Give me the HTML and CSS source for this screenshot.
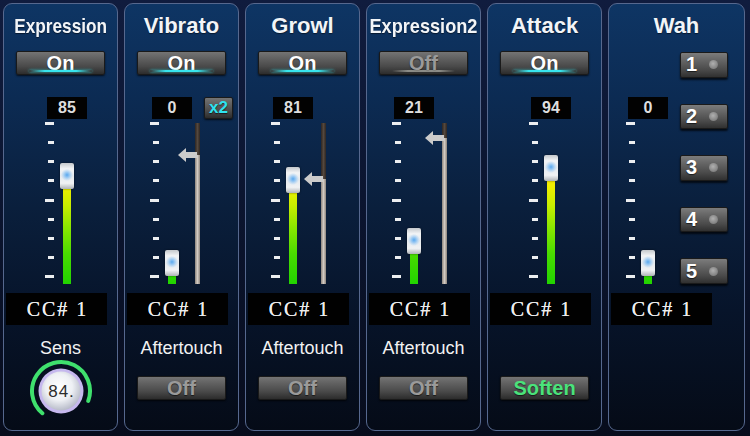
FILE: index.html
```html
<!DOCTYPE html>
<html>
<head>
<meta charset="utf-8">
<title>Controllers</title>
<link rel="stylesheet" href="styles.css">
</head>
<body>
<div class="rack">

  <section class="panel p-main">
    <h2 class="title"><span class="sq sq-expr">Expression</span></h2>
    <div class="btn toggle on">On</div>
    <div class="mid">
      <div class="fader">
        <div class="vbox">85</div>
        <div class="fader-body">
          <div class="ticks"><i class="long"></i><i></i><i></i><i></i><i class="long"></i><i></i><i></i><i></i><i class="long"></i></div>
          <div class="track"><div class="bar" style="height:108px"></div><div class="handle" style="top:43px"></div></div>
        </div>
      </div>
    </div>
    <div class="cc">CC# 1</div>
    <div class="label">Sens</div>
    <svg class="knob" width="64" height="64" viewBox="0 0 64 64">
      <defs>
        <radialGradient id="kg" cx="45%" cy="40%" r="62%">
          <stop offset="0" stop-color="#ffffff"/>
          <stop offset="0.55" stop-color="#eef0f4"/>
          <stop offset="1" stop-color="#b4b8c6"/>
        </radialGradient>
      </defs>
      <path d="M13.36 54.21 A29 29 0 1 1 59.25 41.92" fill="none" stroke="#3fe06d" stroke-width="4" stroke-linecap="round"/>
      <circle cx="32" cy="32" r="22.5" fill="#c6b8ee"/>
      <circle cx="32" cy="32" r="19.5" fill="url(#kg)"/>
      <text x="32.5" y="38" text-anchor="middle" class="knob-val">84.</text>
    </svg>
  </section>

  <section class="panel p-aux">
    <h2 class="title">Vibrato</h2>
    <div class="btn toggle on">On</div>
    <div class="mid">
      <div class="fader">
        <div class="vbox">0</div>
        <div class="fader-body">
          <div class="ticks"><i class="long"></i><i></i><i></i><i></i><i class="long"></i><i></i><i></i><i></i><i class="long"></i></div>
          <div class="track"><div class="bar" style="height:21px"></div><div class="handle" style="top:130px"></div></div>
        </div>
      </div>
      <div class="aux aux-vib">
        <div class="aux-top"><div class="btn x2">x2</div></div>
        <div class="line">
          <div class="line-top" style="height:32px"></div>
          <div class="line-bottom"></div>
          <svg class="arrow" style="top:25px" width="19" height="14" viewBox="0 0 19 14"><polygon points="0,7 8,0 8,4 19,4 19,10 8,10 8,14"/></svg>
        </div>
      </div>
    </div>
    <div class="cc">CC# 1</div>
    <div class="label">Aftertouch</div>
    <div class="btn off">Off</div>
  </section>

  <section class="panel p-aux">
    <h2 class="title">Growl</h2>
    <div class="btn toggle on">On</div>
    <div class="mid">
      <div class="fader">
        <div class="vbox">81</div>
        <div class="fader-body">
          <div class="ticks"><i class="long"></i><i></i><i></i><i></i><i class="long"></i><i></i><i></i><i></i><i class="long"></i></div>
          <div class="track"><div class="bar" style="height:104px"></div><div class="handle" style="top:47px"></div></div>
        </div>
      </div>
      <div class="aux">
        <div class="aux-top"></div>
        <div class="line">
          <div class="line-top" style="height:56px"></div>
          <div class="line-bottom"></div>
          <svg class="arrow" style="top:49px" width="19" height="14" viewBox="0 0 19 14"><polygon points="0,7 8,0 8,4 19,4 19,10 8,10 8,14"/></svg>
        </div>
      </div>
    </div>
    <div class="cc">CC# 1</div>
    <div class="label">Aftertouch</div>
    <div class="btn off">Off</div>
  </section>

  <section class="panel p-aux">
    <h2 class="title"><span class="sq sq-expr2">Expression2</span></h2>
    <div class="btn toggle off">Off</div>
    <div class="mid">
      <div class="fader">
        <div class="vbox">21</div>
        <div class="fader-body">
          <div class="ticks"><i class="long"></i><i></i><i></i><i></i><i class="long"></i><i></i><i></i><i></i><i class="long"></i></div>
          <div class="track"><div class="bar" style="height:42px"></div><div class="handle" style="top:108px"></div></div>
        </div>
      </div>
      <div class="aux">
        <div class="aux-top"></div>
        <div class="line">
          <div class="line-top" style="height:15px"></div>
          <div class="line-bottom"></div>
          <svg class="arrow" style="top:8px" width="19" height="14" viewBox="0 0 19 14"><polygon points="0,7 8,0 8,4 19,4 19,10 8,10 8,14"/></svg>
        </div>
      </div>
    </div>
    <div class="cc">CC# 1</div>
    <div class="label">Aftertouch</div>
    <div class="btn off">Off</div>
  </section>

  <section class="panel p-main">
    <h2 class="title">Attack</h2>
    <div class="btn toggle on">On</div>
    <div class="mid">
      <div class="fader">
        <div class="vbox">94</div>
        <div class="fader-body">
          <div class="ticks"><i class="long"></i><i></i><i></i><i></i><i class="long"></i><i></i><i></i><i></i><i class="long"></i></div>
          <div class="track"><div class="bar" style="height:117px"></div><div class="handle" style="top:35px"></div></div>
        </div>
      </div>
    </div>
    <div class="cc">CC# 1</div>
    <div class="label"></div>
    <div class="btn soften">Soften</div>
  </section>

  <section class="panel p-wah">
    <h2 class="title">Wah</h2>
    <div class="wah-body">
      <div class="fader">
        <div class="vbox">0</div>
        <div class="fader-body">
          <div class="ticks"><i class="long"></i><i></i><i></i><i></i><i class="long"></i><i></i><i></i><i></i><i class="long"></i></div>
          <div class="track"><div class="bar" style="height:21px"></div><div class="handle" style="top:130px"></div></div>
        </div>
      </div>
      <div class="presets">
        <div class="preset"><span>1</span><b class="led"></b></div>
        <div class="preset"><span>2</span><b class="led"></b></div>
        <div class="preset"><span>3</span><b class="led"></b></div>
        <div class="preset"><span>4</span><b class="led"></b></div>
        <div class="preset"><span>5</span><b class="led"></b></div>
      </div>
    </div>
    <div class="cc">CC# 1</div>
  </section>

</div>
</body>
</html>
```

FILE: styles.css
```css
html, body {
  margin: 0;
  padding: 0;
}
body {
  width: 750px;
  height: 436px;
  overflow: hidden;
  background: linear-gradient(180deg, #101c3e 0%, #0b1530 45%, #070c1c 100%);
  font-family: "Liberation Sans", Arial, sans-serif;
  color: #fff;
}
.rack {
  display: flex;
  gap: 6px;
  height: 436px;
  box-sizing: border-box;
  padding: 3px 5px 5px 3px;
}
.panel {
  flex: 0 0 115px;
  min-width: 0;
  box-sizing: border-box;
  display: flex;
  flex-direction: column;
  align-items: center;
  padding-top: 9px;
  border: 1px solid #56688e;
  border-radius: 9px;
  background: linear-gradient(180deg, #0e3564 0%, #0c2b53 22%, #0a1f3c 48%, #07142a 72%, #050b17 100%);
}
.p-wah {
  flex: 1 1 auto;
}
.title {
  margin: 0;
  height: 26px;
  display: flex;
  justify-content: center;
  align-self: stretch;
  min-width: 0;
  white-space: nowrap;
  font-size: 22px;
  line-height: 26px;
  font-weight: bold;
  color: #f2f5f8;
  text-shadow: 0 1px 1px rgba(0, 0, 0, 0.5);
}
.sq {
  display: inline-block;
  flex: none;
  font-size: 21px;
}
.sq-expr {
  transform: scaleX(0.82);
}
.sq-expr2 {
  transform: scaleX(0.865);
}

/* buttons */
.btn {
  position: relative;
  width: 89px;
  height: 24px;
  box-sizing: border-box;
  border: 1px solid #1a1a1a;
  border-radius: 2px;
  background: linear-gradient(180deg, #747474 0%, #606060 30%, #4a4a4a 65%, #2c2c2c 100%);
  box-shadow: 0 1px 2px rgba(0, 0, 0, 0.7);
  font-size: 20px;
  line-height: 22px;
  font-weight: bold;
  text-align: center;
  color: #ffffff;
  text-shadow: 0 1px 1px rgba(0, 0, 0, 0.6);
}
.toggle {
  margin-top: 12px;
}
.btn.off {
  color: #9a9a9a;
}
.toggle.on::after,
.toggle.off::after {
  content: "";
  position: absolute;
  left: 12px;
  right: 12px;
  bottom: 2px;
  height: 2px;
  border-radius: 1px;
}
.toggle.on::after {
  background: linear-gradient(90deg, rgba(40, 220, 230, 0) 0%, #38e4ec 25%, #38e4ec 75%, rgba(40, 220, 230, 0) 100%);
  box-shadow: 0 0 3px rgba(50, 220, 230, 0.8);
}
.toggle.off::after {
  background: linear-gradient(90deg, rgba(200, 200, 200, 0) 0%, rgba(210, 210, 200, 0.55) 25%, rgba(210, 210, 200, 0.55) 75%, rgba(200, 200, 200, 0) 100%);
}
.btn.soften {
  color: #4be27b;
  margin-top: 17px;
}
.label + .btn {
  margin-top: 17px;
}

/* middle section */
.mid {
  align-self: stretch;
  display: flex;
  margin-top: 22px;
  height: 187px;
}
.p-main .mid {
  padding-left: 41px;
}
.p-aux .mid {
  padding-left: 25px;
}
.fader {
  width: 44px;
  display: flex;
  flex-direction: column;
}
.vbox {
  width: 40px;
  height: 22px;
  margin-left: 2px;
  margin-bottom: 1px;
  background: #020202;
  font-size: 16px;
  line-height: 22px;
  font-weight: bold;
  text-align: center;
  color: #dedede;
}
.fader-body {
  display: flex;
  height: 164px;
  gap: 6px;
}
.ticks {
  width: 9px;
  height: 156px;
  margin-top: 2px;
  display: flex;
  flex-direction: column;
  justify-content: space-between;
  align-items: flex-end;
}
.ticks i {
  display: block;
  width: 6px;
  height: 3px;
  background: #eceef0;
}
.ticks i.long {
  width: 9px;
}
.track {
  position: relative;
  width: 14px;
  height: 164px;
}
.bar {
  position: absolute;
  left: 3px;
  bottom: 0;
  width: 8px;
  background: linear-gradient(180deg, #ff9c00 0%, #f8c800 22%, #f0ee00 40%, #c8ee00 52%, #88e600 66%, #48dc00 82%, #22d400 100%) bottom / 100% 164px no-repeat;
}
.handle {
  position: absolute;
  left: 0;
  width: 14px;
  height: 26px;
  box-sizing: border-box;
  border-radius: 2px;
  background:
    radial-gradient(circle at 50% 46%, #5aa8ee 0, #8cc2f2 2px, rgba(150, 200, 245, 0.5) 4px, rgba(150, 200, 245, 0) 6px),
    linear-gradient(180deg, #c4c8cc 0%, #f2f4f6 22%, #e6eaee 50%, #f0f2f4 78%, #b0b4b8 100%);
  box-shadow: 0 0 2px rgba(0, 0, 0, 0.6);
}

/* secondary line */
.aux {
  display: flex;
  flex-direction: column;
  margin-left: 6px;
}
.aux-vib {
  margin-left: 1px;
}
.aux-top {
  height: 22px;
  display: flex;
}
.x2 {
  width: 29px;
  height: 22px;
  margin-left: 9px;
  font-size: 17px;
  line-height: 20px;
  color: #2fe2ef;
}
.line {
  position: relative;
  width: 5px;
  height: 161px;
  margin-top: 4px;
  display: flex;
  flex-direction: column;
}
.line-top {
  background: linear-gradient(90deg, #2e2622, #54483e 50%, #2e2622);
}
.line-bottom {
  flex: 1;
  background: linear-gradient(90deg, #8c847c, #d2cac2 50%, #8c847c);
}
.arrow {
  position: absolute;
  right: 3px;
  fill: #cbcbcb;
  filter: blur(0.4px);
}

/* bottom */
.cc {
  align-self: flex-start;
  margin-left: 2px;
  margin-top: 9px;
  width: 101px;
  height: 32px;
  background: #010101;
  font-family: "Liberation Serif", "Times New Roman", serif;
  font-size: 20px;
  line-height: 32px;
  letter-spacing: 2px;
  padding-left: 2px;
  box-sizing: border-box;
  text-align: center;
  color: #ececec;
  text-shadow: 0 0 0.6px #ffffff;
}
.label {
  margin-top: 12px;
  height: 22px;
  font-size: 18px;
  line-height: 22px;
  color: #f2f2f2;
}
.knob {
  display: block;
}
.knob-val {
  font-family: "Liberation Sans", Arial, sans-serif;
  font-size: 17px;
  letter-spacing: 1px;
  fill: #2c2c2c;
}

/* wah */
.wah-body {
  align-self: stretch;
  display: flex;
  justify-content: space-between;
  margin-top: 12px;
  height: 233px;
  padding-left: 17px;
  padding-right: 16px;
}
.wah-body .fader {
  margin-top: 46px;
}
.presets {
  display: flex;
  flex-direction: column;
  gap: 26px;
  margin-top: 1px;
}
.preset {
  width: 48px;
  height: 27px;
  box-sizing: border-box;
  display: flex;
  align-items: center;
  padding-left: 5px;
  border: 1px solid #1a1a1a;
  border-radius: 2px;
  background: linear-gradient(180deg, #7c7c7c 0%, #626262 35%, #4a4a4a 70%, #303030 100%);
  box-shadow: 0 2px 2px rgba(0, 0, 0, 0.7);
  font-size: 20px;
  font-weight: bold;
  color: #ffffff;
  text-shadow: 0 1px 1px rgba(0, 0, 0, 0.6);
}
.led {
  width: 9px;
  height: 9px;
  margin-left: auto;
  margin-right: 9px;
  border-radius: 50%;
  background: radial-gradient(circle at 45% 40%, #b0b0b0, #808080 70%, #6a6a6a);
}
```
